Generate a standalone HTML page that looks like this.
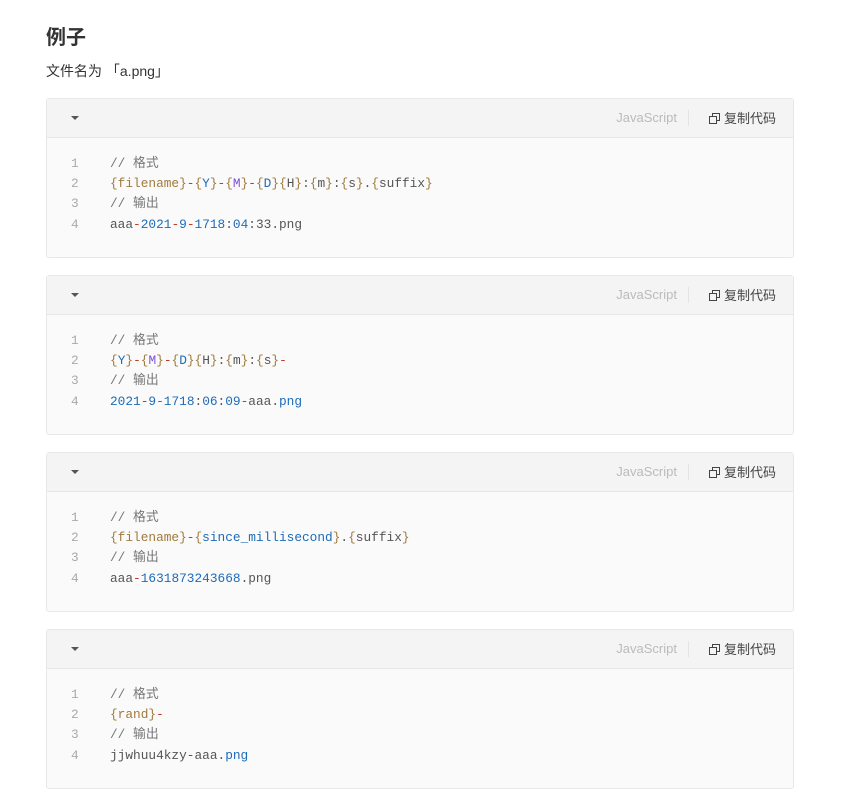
<!DOCTYPE html>
<html><head><meta charset="utf-8"><style>
body{margin:0;background:#fff;font-family:"Liberation Sans","Noto Sans CJK SC",sans-serif;color:#333;width:846px;height:802px;overflow:hidden;position:relative}
h2{position:absolute;left:46px;top:24px;margin:0;font-size:20px;font-weight:bold;color:#333;line-height:28px}
.sub{position:absolute;left:46px;top:61px;font-size:14px;line-height:20px;color:#333}
.blk{position:absolute;left:46px;width:748px;height:160px;border:1px solid #e8e8e8;border-radius:3px;background:#fafafa;box-sizing:border-box}
.hd{height:38px;background:#f4f4f4;border-bottom:1px solid #e6e6e6;position:relative}
.arr{position:absolute;left:24px;top:17px;width:0;height:0;border-left:4px solid transparent;border-right:4px solid transparent;border-top:4px solid #555}
.lang{position:absolute;right:116px;top:11px;font-size:13px;color:#bbb}
.sep{position:absolute;right:104px;top:11px;width:1px;height:16px;background:#e4e4e4}
.copy{position:absolute;right:17px;top:9px;font-size:13px;color:#444;font-family:"Liberation Sans","Noto Sans CJK SC",sans-serif}
.copy svg{vertical-align:-1px;margin-right:4px}
.code{position:absolute;top:55px;left:0;font-family:"Liberation Mono","Noto Sans CJK SC",monospace;font-size:12.8px;line-height:20.3px}
.ln{position:absolute;left:24px;width:10px;color:#aaa}
.tx{position:absolute;left:63px;white-space:pre;color:#555}
.b{color:#a07a3c}.r{color:#c0392b}.u{color:#1e6bb8}.p{color:#7d4cdb}.c{color:#777}
</style></head><body>
<h2>例子</h2>
<div class="sub">文件名为 「a.png」</div>

<div class="blk" style="top:98px"><div class="hd"><div class="arr"></div><span class="lang">JavaScript</span><div class="sep"></div><span class="copy"><svg width="11" height="11" viewBox="0 0 11 11"><rect x="3.5" y="0.5" width="7" height="7" fill="none" stroke="#444"/><rect x="0.5" y="3.5" width="7" height="7" fill="#f4f4f4" stroke="#444"/></svg>复制代码</span></div>
<div class="code">
<div class="ln" style="top:0">1</div><div class="tx c" style="top:0">// 格式</div>
<div class="ln" style="top:20px">2</div><div class="tx" style="top:20px"><span class="b">{filename}</span><span class="r">-</span><span class="b">{</span><span class="u">Y</span><span class="b">}</span><span class="r">-</span><span class="b">{</span><span class="p">M</span><span class="b">}</span><span class="r">-</span><span class="b">{</span><span class="u">D</span><span class="b">}{</span>H<span class="b">}</span>:<span class="b">{</span>m<span class="b">}</span>:<span class="b">{</span>s<span class="b">}</span>.<span class="b">{</span>suffix<span class="b">}</span></div>
<div class="ln" style="top:40px">3</div><div class="tx c" style="top:40px">// 输出</div>
<div class="ln" style="top:61px">4</div><div class="tx" style="top:61px">aaa<span class="r">-</span><span class="u">2021</span><span class="r">-</span><span class="u">9</span><span class="r">-</span><span class="u">1718</span>:<span class="u">04</span>:33.png</div>
</div></div>

<div class="blk" style="top:275px"><div class="hd"><div class="arr"></div><span class="lang">JavaScript</span><div class="sep"></div><span class="copy"><svg width="11" height="11" viewBox="0 0 11 11"><rect x="3.5" y="0.5" width="7" height="7" fill="none" stroke="#444"/><rect x="0.5" y="3.5" width="7" height="7" fill="#f4f4f4" stroke="#444"/></svg>复制代码</span></div>
<div class="code">
<div class="ln" style="top:0">1</div><div class="tx c" style="top:0">// 格式</div>
<div class="ln" style="top:20px">2</div><div class="tx" style="top:20px"><span class="b">{</span><span class="u">Y</span><span class="b">}</span><span class="r">-</span><span class="b">{</span><span class="p">M</span><span class="b">}</span><span class="r">-</span><span class="b">{</span><span class="u">D</span><span class="b">}{</span>H<span class="b">}</span>:<span class="b">{</span>m<span class="b">}</span>:<span class="b">{</span>s<span class="b">}</span><span class="r">-</span></div>
<div class="ln" style="top:40px">3</div><div class="tx c" style="top:40px">// 输出</div>
<div class="ln" style="top:61px">4</div><div class="tx" style="top:61px"><span class="u">2021</span><span class="r">-</span><span class="u">9</span><span class="r">-</span><span class="u">1718</span>:<span class="u">06</span>:<span class="u">09</span><span class="r">-</span>aaa.<span class="u">png</span></div>
</div></div>

<div class="blk" style="top:452px"><div class="hd"><div class="arr"></div><span class="lang">JavaScript</span><div class="sep"></div><span class="copy"><svg width="11" height="11" viewBox="0 0 11 11"><rect x="3.5" y="0.5" width="7" height="7" fill="none" stroke="#444"/><rect x="0.5" y="3.5" width="7" height="7" fill="#f4f4f4" stroke="#444"/></svg>复制代码</span></div>
<div class="code">
<div class="ln" style="top:0">1</div><div class="tx c" style="top:0">// 格式</div>
<div class="ln" style="top:20px">2</div><div class="tx" style="top:20px"><span class="b">{filename}</span><span class="r">-</span><span class="b">{</span><span class="u">since_millisecond</span><span class="b">}</span>.<span class="b">{</span>suffix<span class="b">}</span></div>
<div class="ln" style="top:40px">3</div><div class="tx c" style="top:40px">// 输出</div>
<div class="ln" style="top:61px">4</div><div class="tx" style="top:61px">aaa<span class="r">-</span><span class="u">1631873243668</span>.png</div>
</div></div>

<div class="blk" style="top:629px"><div class="hd"><div class="arr"></div><span class="lang">JavaScript</span><div class="sep"></div><span class="copy"><svg width="11" height="11" viewBox="0 0 11 11"><rect x="3.5" y="0.5" width="7" height="7" fill="none" stroke="#444"/><rect x="0.5" y="3.5" width="7" height="7" fill="#f4f4f4" stroke="#444"/></svg>复制代码</span></div>
<div class="code">
<div class="ln" style="top:0">1</div><div class="tx c" style="top:0">// 格式</div>
<div class="ln" style="top:20px">2</div><div class="tx" style="top:20px"><span class="b">{rand}</span><span class="r">-</span></div>
<div class="ln" style="top:40px">3</div><div class="tx c" style="top:40px">// 输出</div>
<div class="ln" style="top:61px">4</div><div class="tx" style="top:61px">jjwhuu4kzy-aaa.<span class="u">png</span></div>
</div></div>
</body></html>
